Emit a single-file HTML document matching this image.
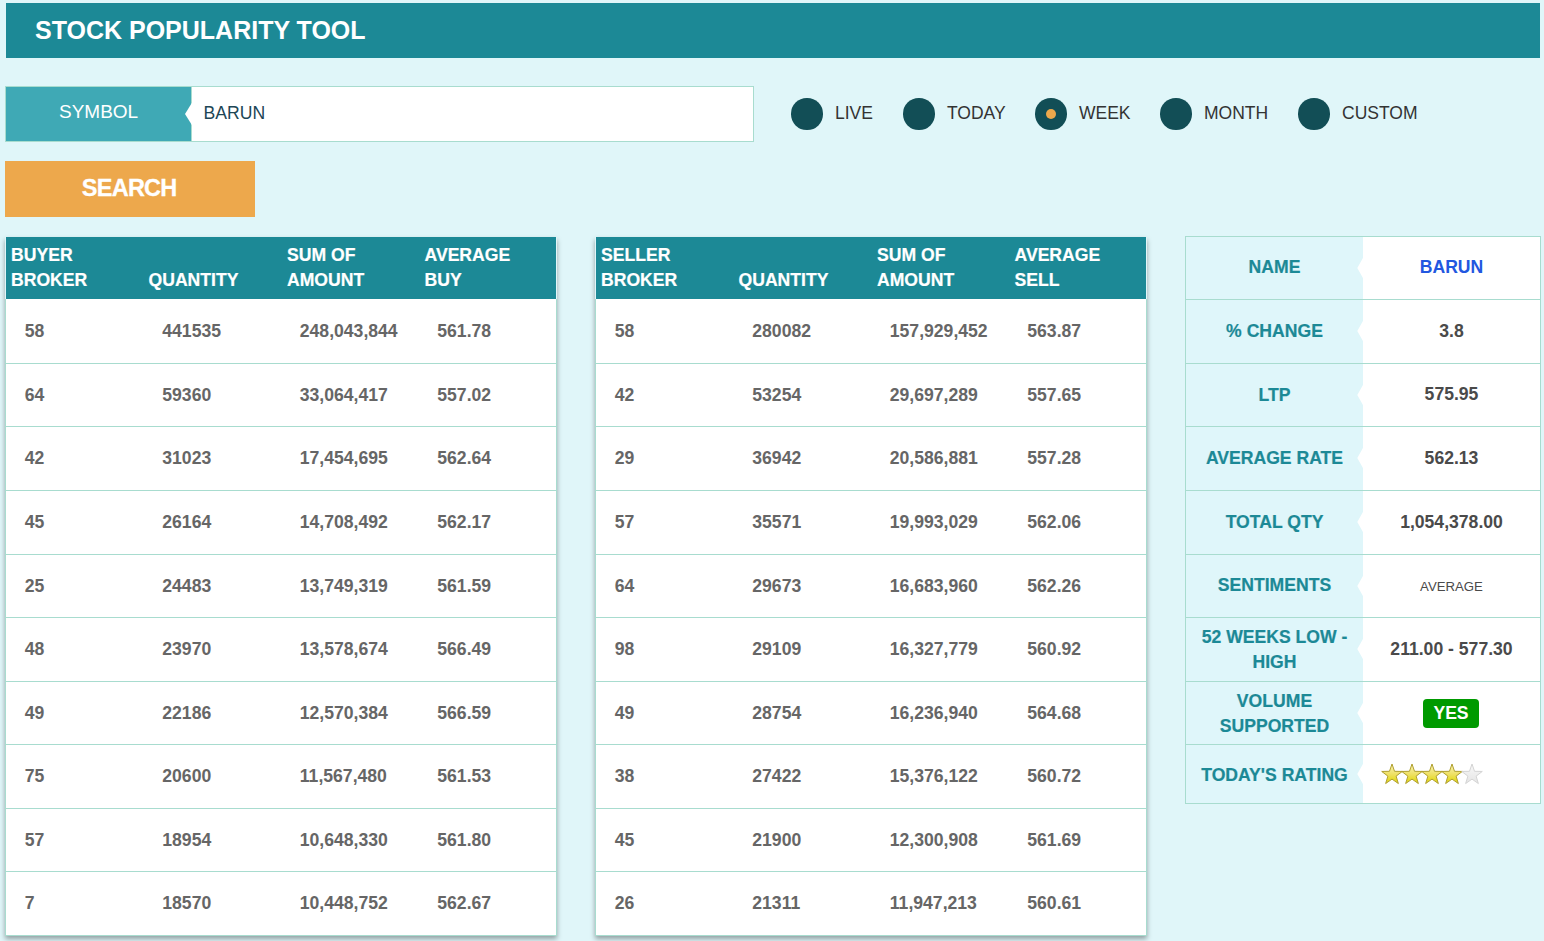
<!DOCTYPE html>
<html><head><meta charset="utf-8"><title>Stock Popularity Tool</title>
<style>
*{box-sizing:border-box}
html,body{margin:0;padding:0}
body{width:1544px;height:941px;overflow:hidden;background:#e0f6f9;font-family:"Liberation Sans",sans-serif;position:relative}
.a{position:absolute;white-space:nowrap}
.hd,.lb{-webkit-text-stroke:0.2px currentColor}
.hd{color:#fff;font-weight:bold;font-size:17.6px;line-height:24.5px}
.bd{color:#666666;font-weight:bold;font-size:17.6px;line-height:20px}
.lb{color:#1c8996;font-weight:bold;font-size:17.6px;line-height:25px;text-align:center}
.vl{color:#4a4a4a;font-weight:bold;font-size:17.6px;line-height:20px;text-align:center}
.rad{position:absolute;width:31.5px;height:31.5px;border-radius:50%;background:#124e56}
.rt{position:absolute;white-space:nowrap;font-size:17.5px;line-height:20px;color:#333}
</style></head><body>

<div class="a" style="left:6px;top:3px;width:1534px;height:55px;background:#1c8996"></div>
<div class="a" style="left:35px;top:15px;font-size:25px;line-height:30px;font-weight:bold;color:#fff">STOCK POPULARITY TOOL</div>
<div class="a" style="left:5px;top:86px;width:749px;height:56px;background:#fff;border:1px solid #a8dccf"></div>
<div class="a" style="left:6px;top:87px;width:185px;height:54px;background:#3fa9b5"></div>
<div class="a" style="left:191px;top:87px;width:1px;height:54px;background:#a8dccf"></div>
<svg class="a" style="left:184px;top:103px" width="9" height="23"><polygon points="8,-0.3 1,11 8,22.3" fill="#fff"/></svg>
<div class="a" style="left:59px;top:102px;font-size:19px;line-height:20px;color:#fff">SYMBOL</div>
<div class="a" style="left:203.5px;top:103px;font-size:17.6px;line-height:20px;color:#1d4656">BARUN</div>
<div class="rad" style="left:791px;top:98px"></div>
<div class="rt" style="left:835px;top:103px">LIVE</div>
<div class="rad" style="left:903px;top:98px"></div>
<div class="rt" style="left:947px;top:103px">TODAY</div>
<div class="rad" style="left:1035px;top:98px"></div>
<div class="a" style="left:1045.75px;top:108.9px;width:10.2px;height:10.2px;border-radius:50%;background:#eda84c"></div>
<div class="rt" style="left:1079px;top:103px">WEEK</div>
<div class="rad" style="left:1160px;top:98px"></div>
<div class="rt" style="left:1204px;top:103px">MONTH</div>
<div class="rad" style="left:1298px;top:98px"></div>
<div class="rt" style="left:1342px;top:103px">CUSTOM</div>
<div class="a" style="left:5px;top:161px;width:250px;height:56px;background:#eda84c"></div>
<div class="a" style="left:4.2px;top:173px;width:250px;text-align:center;font-size:23.5px;letter-spacing:-0.75px;-webkit-text-stroke:0.3px #fff;line-height:30px;font-weight:bold;color:#fff">SEARCH</div>
<div class="a" style="left:5px;top:237px;width:552px;height:699px;box-shadow:0 3px 5px rgba(0,0,0,.35)"></div>
<div class="a" style="left:5px;top:299px;width:552px;height:637px;background:#fff;border-left:1px solid #a8dccf;border-right:1px solid #a8dccf"></div>
<div class="a" style="left:6px;top:237px;width:550px;height:62px;background:#1c8996"></div>
<div class="a" style="left:5px;top:363px;width:552px;height:1px;background:#a8dccf"></div>
<div class="a" style="left:5px;top:426px;width:552px;height:1px;background:#a8dccf"></div>
<div class="a" style="left:5px;top:490px;width:552px;height:1px;background:#a8dccf"></div>
<div class="a" style="left:5px;top:554px;width:552px;height:1px;background:#a8dccf"></div>
<div class="a" style="left:5px;top:617px;width:552px;height:1px;background:#a8dccf"></div>
<div class="a" style="left:5px;top:681px;width:552px;height:1px;background:#a8dccf"></div>
<div class="a" style="left:5px;top:744px;width:552px;height:1px;background:#a8dccf"></div>
<div class="a" style="left:5px;top:808px;width:552px;height:1px;background:#a8dccf"></div>
<div class="a" style="left:5px;top:871px;width:552px;height:1px;background:#a8dccf"></div>
<div class="a" style="left:5px;top:935px;width:552px;height:1px;background:#a8dccf"></div>
<div class="a hd" style="left:11px;top:243px">BUYER<br>BROKER</div>
<div class="a hd" style="left:148.5px;top:243px"><br>QUANTITY</div>
<div class="a hd" style="left:287px;top:243px">SUM OF<br>AMOUNT</div>
<div class="a hd" style="left:424.5px;top:243px">AVERAGE<br>BUY</div>
<div class="a bd" style="left:24.8px;top:320.5px">58</div>
<div class="a bd" style="left:162.3px;top:320.5px">441535</div>
<div class="a bd" style="left:299.8px;top:320.5px">248,043,844</div>
<div class="a bd" style="left:437.3px;top:320.5px">561.78</div>
<div class="a bd" style="left:24.8px;top:384.5px">64</div>
<div class="a bd" style="left:162.3px;top:384.5px">59360</div>
<div class="a bd" style="left:299.8px;top:384.5px">33,064,417</div>
<div class="a bd" style="left:437.3px;top:384.5px">557.02</div>
<div class="a bd" style="left:24.8px;top:448.0px">42</div>
<div class="a bd" style="left:162.3px;top:448.0px">31023</div>
<div class="a bd" style="left:299.8px;top:448.0px">17,454,695</div>
<div class="a bd" style="left:437.3px;top:448.0px">562.64</div>
<div class="a bd" style="left:24.8px;top:512.0px">45</div>
<div class="a bd" style="left:162.3px;top:512.0px">26164</div>
<div class="a bd" style="left:299.8px;top:512.0px">14,708,492</div>
<div class="a bd" style="left:437.3px;top:512.0px">562.17</div>
<div class="a bd" style="left:24.8px;top:575.5px">25</div>
<div class="a bd" style="left:162.3px;top:575.5px">24483</div>
<div class="a bd" style="left:299.8px;top:575.5px">13,749,319</div>
<div class="a bd" style="left:437.3px;top:575.5px">561.59</div>
<div class="a bd" style="left:24.8px;top:639.0px">48</div>
<div class="a bd" style="left:162.3px;top:639.0px">23970</div>
<div class="a bd" style="left:299.8px;top:639.0px">13,578,674</div>
<div class="a bd" style="left:437.3px;top:639.0px">566.49</div>
<div class="a bd" style="left:24.8px;top:702.5px">49</div>
<div class="a bd" style="left:162.3px;top:702.5px">22186</div>
<div class="a bd" style="left:299.8px;top:702.5px">12,570,384</div>
<div class="a bd" style="left:437.3px;top:702.5px">566.59</div>
<div class="a bd" style="left:24.8px;top:766.0px">75</div>
<div class="a bd" style="left:162.3px;top:766.0px">20600</div>
<div class="a bd" style="left:299.8px;top:766.0px">11,567,480</div>
<div class="a bd" style="left:437.3px;top:766.0px">561.53</div>
<div class="a bd" style="left:24.8px;top:829.5px">57</div>
<div class="a bd" style="left:162.3px;top:829.5px">18954</div>
<div class="a bd" style="left:299.8px;top:829.5px">10,648,330</div>
<div class="a bd" style="left:437.3px;top:829.5px">561.80</div>
<div class="a bd" style="left:24.8px;top:893.0px">7</div>
<div class="a bd" style="left:162.3px;top:893.0px">18570</div>
<div class="a bd" style="left:299.8px;top:893.0px">10,448,752</div>
<div class="a bd" style="left:437.3px;top:893.0px">562.67</div>
<div class="a" style="left:595px;top:237px;width:552px;height:699px;box-shadow:0 3px 5px rgba(0,0,0,.35)"></div>
<div class="a" style="left:595px;top:299px;width:552px;height:637px;background:#fff;border-left:1px solid #a8dccf;border-right:1px solid #a8dccf"></div>
<div class="a" style="left:596px;top:237px;width:550px;height:62px;background:#1c8996"></div>
<div class="a" style="left:595px;top:363px;width:552px;height:1px;background:#a8dccf"></div>
<div class="a" style="left:595px;top:426px;width:552px;height:1px;background:#a8dccf"></div>
<div class="a" style="left:595px;top:490px;width:552px;height:1px;background:#a8dccf"></div>
<div class="a" style="left:595px;top:554px;width:552px;height:1px;background:#a8dccf"></div>
<div class="a" style="left:595px;top:617px;width:552px;height:1px;background:#a8dccf"></div>
<div class="a" style="left:595px;top:681px;width:552px;height:1px;background:#a8dccf"></div>
<div class="a" style="left:595px;top:744px;width:552px;height:1px;background:#a8dccf"></div>
<div class="a" style="left:595px;top:808px;width:552px;height:1px;background:#a8dccf"></div>
<div class="a" style="left:595px;top:871px;width:552px;height:1px;background:#a8dccf"></div>
<div class="a" style="left:595px;top:935px;width:552px;height:1px;background:#a8dccf"></div>
<div class="a hd" style="left:601px;top:243px">SELLER<br>BROKER</div>
<div class="a hd" style="left:738.5px;top:243px"><br>QUANTITY</div>
<div class="a hd" style="left:877px;top:243px">SUM OF<br>AMOUNT</div>
<div class="a hd" style="left:1014.5px;top:243px">AVERAGE<br>SELL</div>
<div class="a bd" style="left:614.8px;top:320.5px">58</div>
<div class="a bd" style="left:752.3px;top:320.5px">280082</div>
<div class="a bd" style="left:889.8px;top:320.5px">157,929,452</div>
<div class="a bd" style="left:1027.3px;top:320.5px">563.87</div>
<div class="a bd" style="left:614.8px;top:384.5px">42</div>
<div class="a bd" style="left:752.3px;top:384.5px">53254</div>
<div class="a bd" style="left:889.8px;top:384.5px">29,697,289</div>
<div class="a bd" style="left:1027.3px;top:384.5px">557.65</div>
<div class="a bd" style="left:614.8px;top:448.0px">29</div>
<div class="a bd" style="left:752.3px;top:448.0px">36942</div>
<div class="a bd" style="left:889.8px;top:448.0px">20,586,881</div>
<div class="a bd" style="left:1027.3px;top:448.0px">557.28</div>
<div class="a bd" style="left:614.8px;top:512.0px">57</div>
<div class="a bd" style="left:752.3px;top:512.0px">35571</div>
<div class="a bd" style="left:889.8px;top:512.0px">19,993,029</div>
<div class="a bd" style="left:1027.3px;top:512.0px">562.06</div>
<div class="a bd" style="left:614.8px;top:575.5px">64</div>
<div class="a bd" style="left:752.3px;top:575.5px">29673</div>
<div class="a bd" style="left:889.8px;top:575.5px">16,683,960</div>
<div class="a bd" style="left:1027.3px;top:575.5px">562.26</div>
<div class="a bd" style="left:614.8px;top:639.0px">98</div>
<div class="a bd" style="left:752.3px;top:639.0px">29109</div>
<div class="a bd" style="left:889.8px;top:639.0px">16,327,779</div>
<div class="a bd" style="left:1027.3px;top:639.0px">560.92</div>
<div class="a bd" style="left:614.8px;top:702.5px">49</div>
<div class="a bd" style="left:752.3px;top:702.5px">28754</div>
<div class="a bd" style="left:889.8px;top:702.5px">16,236,940</div>
<div class="a bd" style="left:1027.3px;top:702.5px">564.68</div>
<div class="a bd" style="left:614.8px;top:766.0px">38</div>
<div class="a bd" style="left:752.3px;top:766.0px">27422</div>
<div class="a bd" style="left:889.8px;top:766.0px">15,376,122</div>
<div class="a bd" style="left:1027.3px;top:766.0px">560.72</div>
<div class="a bd" style="left:614.8px;top:829.5px">45</div>
<div class="a bd" style="left:752.3px;top:829.5px">21900</div>
<div class="a bd" style="left:889.8px;top:829.5px">12,300,908</div>
<div class="a bd" style="left:1027.3px;top:829.5px">561.69</div>
<div class="a bd" style="left:614.8px;top:893.0px">26</div>
<div class="a bd" style="left:752.3px;top:893.0px">21311</div>
<div class="a bd" style="left:889.8px;top:893.0px">11,947,213</div>
<div class="a bd" style="left:1027.3px;top:893.0px">560.61</div>
<div class="a" style="left:1185px;top:236px;width:356px;height:568px;border:1px solid #a8dccf;background:#fff"></div>
<div class="a" style="left:1186px;top:237px;width:177px;height:566px;background:#dff6fa"></div>
<div class="a" style="left:1186px;top:299px;width:354px;height:1px;background:#a8dccf"></div>
<div class="a" style="left:1186px;top:363px;width:354px;height:1px;background:#a8dccf"></div>
<div class="a" style="left:1186px;top:426px;width:354px;height:1px;background:#a8dccf"></div>
<div class="a" style="left:1186px;top:490px;width:354px;height:1px;background:#a8dccf"></div>
<div class="a" style="left:1186px;top:554px;width:354px;height:1px;background:#a8dccf"></div>
<div class="a" style="left:1186px;top:617px;width:354px;height:1px;background:#a8dccf"></div>
<div class="a" style="left:1186px;top:681px;width:354px;height:1px;background:#a8dccf"></div>
<div class="a" style="left:1186px;top:744px;width:354px;height:1px;background:#a8dccf"></div>
<svg class="a" style="left:1356px;top:256.5px" width="8" height="22"><polygon points="7.5,0 1.3,11 7.5,22" fill="#fff"/></svg>
<div class="a lb" style="left:1186px;width:177px;top:255.4px">NAME</div>
<svg class="a" style="left:1356px;top:320.0px" width="8" height="22"><polygon points="7.5,0 1.3,11 7.5,22" fill="#fff"/></svg>
<div class="a lb" style="left:1186px;width:177px;top:319.1px">% CHANGE</div>
<svg class="a" style="left:1356px;top:383.5px" width="8" height="22"><polygon points="7.5,0 1.3,11 7.5,22" fill="#fff"/></svg>
<div class="a lb" style="left:1186px;width:177px;top:382.8px">LTP</div>
<svg class="a" style="left:1356px;top:447.0px" width="8" height="22"><polygon points="7.5,0 1.3,11 7.5,22" fill="#fff"/></svg>
<div class="a lb" style="left:1186px;width:177px;top:446.35px">AVERAGE RATE</div>
<svg class="a" style="left:1356px;top:511.0px" width="8" height="22"><polygon points="7.5,0 1.3,11 7.5,22" fill="#fff"/></svg>
<div class="a lb" style="left:1186px;width:177px;top:510.1px">TOTAL QTY</div>
<svg class="a" style="left:1356px;top:574.5px" width="8" height="22"><polygon points="7.5,0 1.3,11 7.5,22" fill="#fff"/></svg>
<div class="a lb" style="left:1186px;width:177px;top:573.4px">SENTIMENTS</div>
<svg class="a" style="left:1356px;top:638.0px" width="8" height="22"><polygon points="7.5,0 1.3,11 7.5,22" fill="#fff"/></svg>
<div class="a lb" style="left:1186px;width:177px;top:625.35px">52 WEEKS LOW -<br>HIGH</div>
<svg class="a" style="left:1356px;top:701.5px" width="8" height="22"><polygon points="7.5,0 1.3,11 7.5,22" fill="#fff"/></svg>
<div class="a lb" style="left:1186px;width:177px;top:689px">VOLUME<br>SUPPORTED</div>
<svg class="a" style="left:1356px;top:762.5px" width="8" height="22"><polygon points="7.5,0 1.3,11 7.5,22" fill="#fff"/></svg>
<div class="a lb" style="left:1186px;width:177px;top:762.7px">TODAY'S RATING</div>
<div class="a vl" style="left:1363px;width:177px;top:257.0px"><span style="color:#2257e0">BARUN</span></div>
<div class="a vl" style="left:1363px;width:177px;top:320.5px">3.8</div>
<div class="a vl" style="left:1363px;width:177px;top:384.0px">575.95</div>
<div class="a vl" style="left:1363px;width:177px;top:447.5px">562.13</div>
<div class="a vl" style="left:1363px;width:177px;top:511.5px">1,054,378.00</div>
<div class="a vl" style="left:1363px;width:177px;top:575.0px"><span style="font-weight:normal;font-size:13.2px">AVERAGE</span></div>
<div class="a vl" style="left:1363px;width:177px;top:638.5px">211.00 - 577.30</div>
<div class="a" style="left:1423px;top:699px;width:56px;height:29px;border-radius:4px;background:#009a00;color:#fff;font-weight:bold;font-size:17.6px;line-height:29px;text-align:center">YES</div>
<svg class="a" style="left:1380px;top:762px" width="104" height="24"><defs><linearGradient id="g" x1="0" y1="0" x2="0" y2="1"><stop offset="0.1" stop-color="#f8f0a8"/><stop offset="0.55" stop-color="#eee060"/><stop offset="0.8" stop-color="#e6dc28"/><stop offset="1" stop-color="#d8c830"/></linearGradient><linearGradient id="s" x1="0" y1="0" x2="0" y2="1"><stop offset="0" stop-color="#f8f8f8"/><stop offset="1" stop-color="#e4e4e4"/></linearGradient></defs><polygon points="12.00,2.00 14.54,9.31 22.27,9.46 16.11,14.13 18.35,21.54 12.00,17.12 5.65,21.54 7.89,14.13 1.73,9.46 9.46,9.31" fill="url(#g)" stroke="#b0a030" stroke-width="1" stroke-linejoin="round"/><polygon points="32.00,2.00 34.54,9.31 42.27,9.46 36.11,14.13 38.35,21.54 32.00,17.12 25.65,21.54 27.89,14.13 21.73,9.46 29.46,9.31" fill="url(#g)" stroke="#b0a030" stroke-width="1" stroke-linejoin="round"/><polygon points="52.00,2.00 54.54,9.31 62.27,9.46 56.11,14.13 58.35,21.54 52.00,17.12 45.65,21.54 47.89,14.13 41.73,9.46 49.46,9.31" fill="url(#g)" stroke="#b0a030" stroke-width="1" stroke-linejoin="round"/><polygon points="72.00,2.00 74.54,9.31 82.27,9.46 76.11,14.13 78.35,21.54 72.00,17.12 65.65,21.54 67.89,14.13 61.73,9.46 69.46,9.31" fill="url(#g)" stroke="#b0a030" stroke-width="1" stroke-linejoin="round"/><polygon points="92.00,2.00 94.54,9.31 102.27,9.46 96.11,14.13 98.35,21.54 92.00,17.12 85.65,21.54 87.89,14.13 81.73,9.46 89.46,9.31" fill="url(#s)" stroke="#d4d4d4" stroke-width="1" stroke-linejoin="round"/></svg>
</body></html>
